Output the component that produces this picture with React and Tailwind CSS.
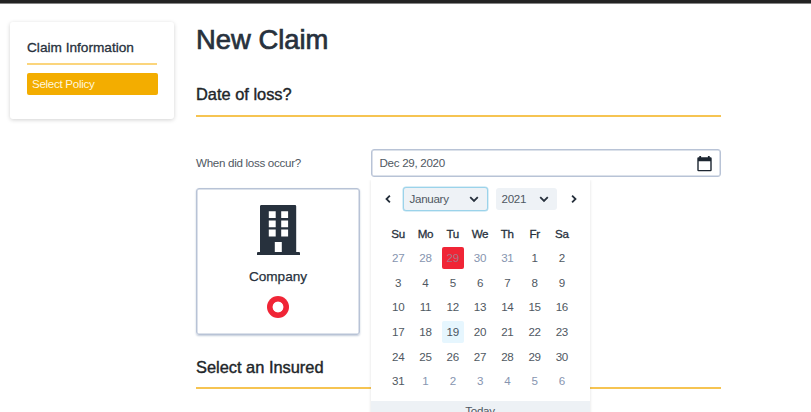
const WEEKDAYS = ["Su", "Mo", "Tu", "We", "Th", "Fr", "Sa"];

const DAYS = [
  ...[27, 28, 29, 30, 31].map((n) => ({ n, outside: true, selected: n === 29 })),
  ...Array.from({ length: 31 }, (_, i) => ({ n: i + 1, today: i + 1 === 19 })),
  ...[1, 2, 3, 4, 5, 6].map((n) => ({ n, outside: true })),
];

function dayClass(day) {
  if (day.selected) return "bg-[#f02536] text-[#a97689]";
  if (day.today) return "bg-[#e6f6fe] text-[#4a5560]";
  if (day.outside) return "text-[#8795b0]";
  return "text-[#4f5862]";
}

function Chevron({ d, className }) {
  return (
    <svg viewBox="0 0 10 10" className={className} fill="none" stroke="#27313d" strokeWidth="1.8">
      <path d={d} />
    </svg>
  );
}

const LEFT = "M6.9 1.6 3.5 5l3.4 3.4";
const RIGHT = "M3.1 1.6 6.5 5 3.1 8.4";
const DOWN = "M1.2 3.2 5 7l3.8-3.8";

function Sidebar() {
  return (
    <aside className="mt-[18px] ml-[10px] h-[97px] w-[164px] shrink-0 rounded-[3px] bg-white px-[17px] pt-[17px] shadow-[0_1px_4px_rgba(0,0,0,0.18)]">
      <h2 className="h-[26px] border-b-2 border-[#fbd57c] text-[13.65px] leading-[18px] tracking-normal whitespace-nowrap text-[#27313d] [-webkit-text-stroke:0.3px]">
        Claim Information
      </h2>
      <div className="mt-[8px] -mr-px h-[22px] rounded-[2px] bg-[#f3ad00] pl-[5px] leading-[22px] text-[#fff6dd]">
        Select Policy
      </div>
    </aside>
  );
}

function DatePicker() {
  return (
    <div className="absolute top-[31px] left-0 z-10 h-[250px] w-[219px] bg-white shadow-[0_0_3px_rgba(0,0,0,0.13)] [clip-path:inset(0_-4px_0_-4px)]">
      <div className="flex h-[37px] items-center pl-[12px]">
        <Chevron d={LEFT} className="h-[10px] w-[10px]" />
        <div className="ml-[10px] flex h-[24px] w-[85px] items-center justify-between rounded-[3px] border border-[#9bd3ea] bg-[#eef2f6] pr-[8px] pl-[6px] shadow-[0_0_0_0.5px_#b5def0]">
          January
          <Chevron d={DOWN} className="h-[10px] w-[10px]" />
        </div>
        <div className="ml-[8px] flex h-[22px] w-[61px] items-center justify-between rounded-[3px] bg-[#eef2f6] pr-[8px] pl-[6px]">
          2021
          <Chevron d={DOWN} className="h-[10px] w-[10px]" />
        </div>
        <Chevron d={RIGHT} className="ml-[12px] h-[10px] w-[10px]" />
      </div>
      <div className="mt-[5px] ml-[14px] grid w-[191px] grid-cols-7 text-center text-[#27313d]">
        {WEEKDAYS.map((d) => (
          <div key={d} className="h-[24px] leading-[24px] [-webkit-text-stroke:0.3px]">{d}</div>
        ))}
      </div>
      <div className="ml-[14px] grid w-[191px] auto-rows-[24.6px] grid-cols-7">
        {DAYS.map((day, i) => (
          <div key={i} className="flex items-center justify-center">
            <span className={`h-[22px] w-[22px] rounded-[2px] text-center leading-[22px] ${dayClass(day)}`}>{day.n}</span>
          </div>
        ))}
      </div>
      <div className="mt-[7px] h-[30px] bg-[#edf1f5] pt-[3px] text-center leading-[14px]">Today</div>
    </div>
  );
}

function DateField() {
  return (
    <div className="relative w-[350.5px]">
      <div className="flex h-[28px] items-center justify-between rounded-[3px] border border-[#b8c3d6] bg-white pr-[8px] pl-[8px] shadow-[inset_0_0_0_0.5px_#b8c3d6]">
        Dec 29, 2020
        <svg viewBox="0 0 15 16" className="mt-[2px] h-[16px] w-[15px]">
          <path d="M2.3 0h1.8v1.3h6.8V0h1.8v1.3h.8A1.2 1.2 0 0 1 14.7 2.5v11.6a1.2 1.2 0 0 1-1.2 1.2h-12A1.2 1.2 0 0 1 .3 14.1V2.5a1.2 1.2 0 0 1 1.2-1.2h.8zM1.7 5.2v8.7h11.6V5.2z" fill="#1c2631" fillRule="evenodd" />
        </svg>
      </div>
      <DatePicker />
    </div>
  );
}

function CompanyCard() {
  return (
    <div className="mt-[10.5px] flex h-[147.5px] w-[164px] flex-col items-center rounded-[3px] border border-[#b8c3d6] pt-[16px] shadow-[inset_0_0_0_0.5px_#b8c3d6,0_1px_2px_#c3ccda]">
      <svg viewBox="0 0 43 50" className="h-[50px] w-[43px]">
        <path d="M4 0h34a1.2 1.2 0 0 1 1.2 1.2V47H42a1 1 0 0 1 1 1v2H0v-2a1 1 0 0 1 1-1h2V1.2A1.2 1.2 0 0 1 4 0z" fill="#27313d" />
        <path d="M11.8 6.2h6.9v6.9h-6.9zM24.2 6.2h6.9v6.9h-6.9zM11.8 15.4h6.9v6.9h-6.9zM24.2 15.4h6.9v6.9h-6.9zM11.8 24.6h6.9v6.9h-6.9zM24.2 24.6h6.9v6.9h-6.9zM17.8 37h7v10h-7z" fill="#fff" />
      </svg>
      <div className="mt-[13px] text-[13.6px] leading-[18px] tracking-normal text-[#27313d] [-webkit-text-stroke:0.25px]">Company</div>
      <div className="mt-[10px] box-border h-[22px] w-[22px] rounded-full bg-[radial-gradient(circle,#fff_5px,#f02536_5.8px)]" />
    </div>
  );
}

export default function App() {
  return (
    <div className="h-[412px] w-[811px] overflow-hidden bg-white font-['Liberation_Sans',Arial,sans-serif] text-[11.6px] tracking-[-0.3px] text-[#4f5862]">
      <div className="h-[4px] border-b border-[#858585] bg-[#232323]" />
      <div className="flex">
        <Sidebar />
        <main className="ml-[22px] w-[525px]">
          <h1 className="mt-[18px] h-[36px] text-[27.4px] leading-[36px] tracking-normal text-[#27313d] [-webkit-text-stroke:0.7px]">New Claim</h1>
          <h2 className="mt-[26px] h-[33px] border-b-2 border-[#f6c452] text-[16.4px] leading-[20px] tracking-normal text-[#212529] [-webkit-text-stroke:0.4px]">
            Date of loss?
          </h2>
          <div className="mt-[32px] flex items-center justify-between">
            <label>When did loss occur?</label>
            <DateField />
          </div>
          <CompanyCard />
          <h2 className="mt-[22px] h-[32px] border-b-2 border-[#f6c452] text-[16.4px] leading-[20px] tracking-normal text-[#212529] [-webkit-text-stroke:0.4px]">
            Select an Insured
          </h2>
        </main>
      </div>
    </div>
  );
}
